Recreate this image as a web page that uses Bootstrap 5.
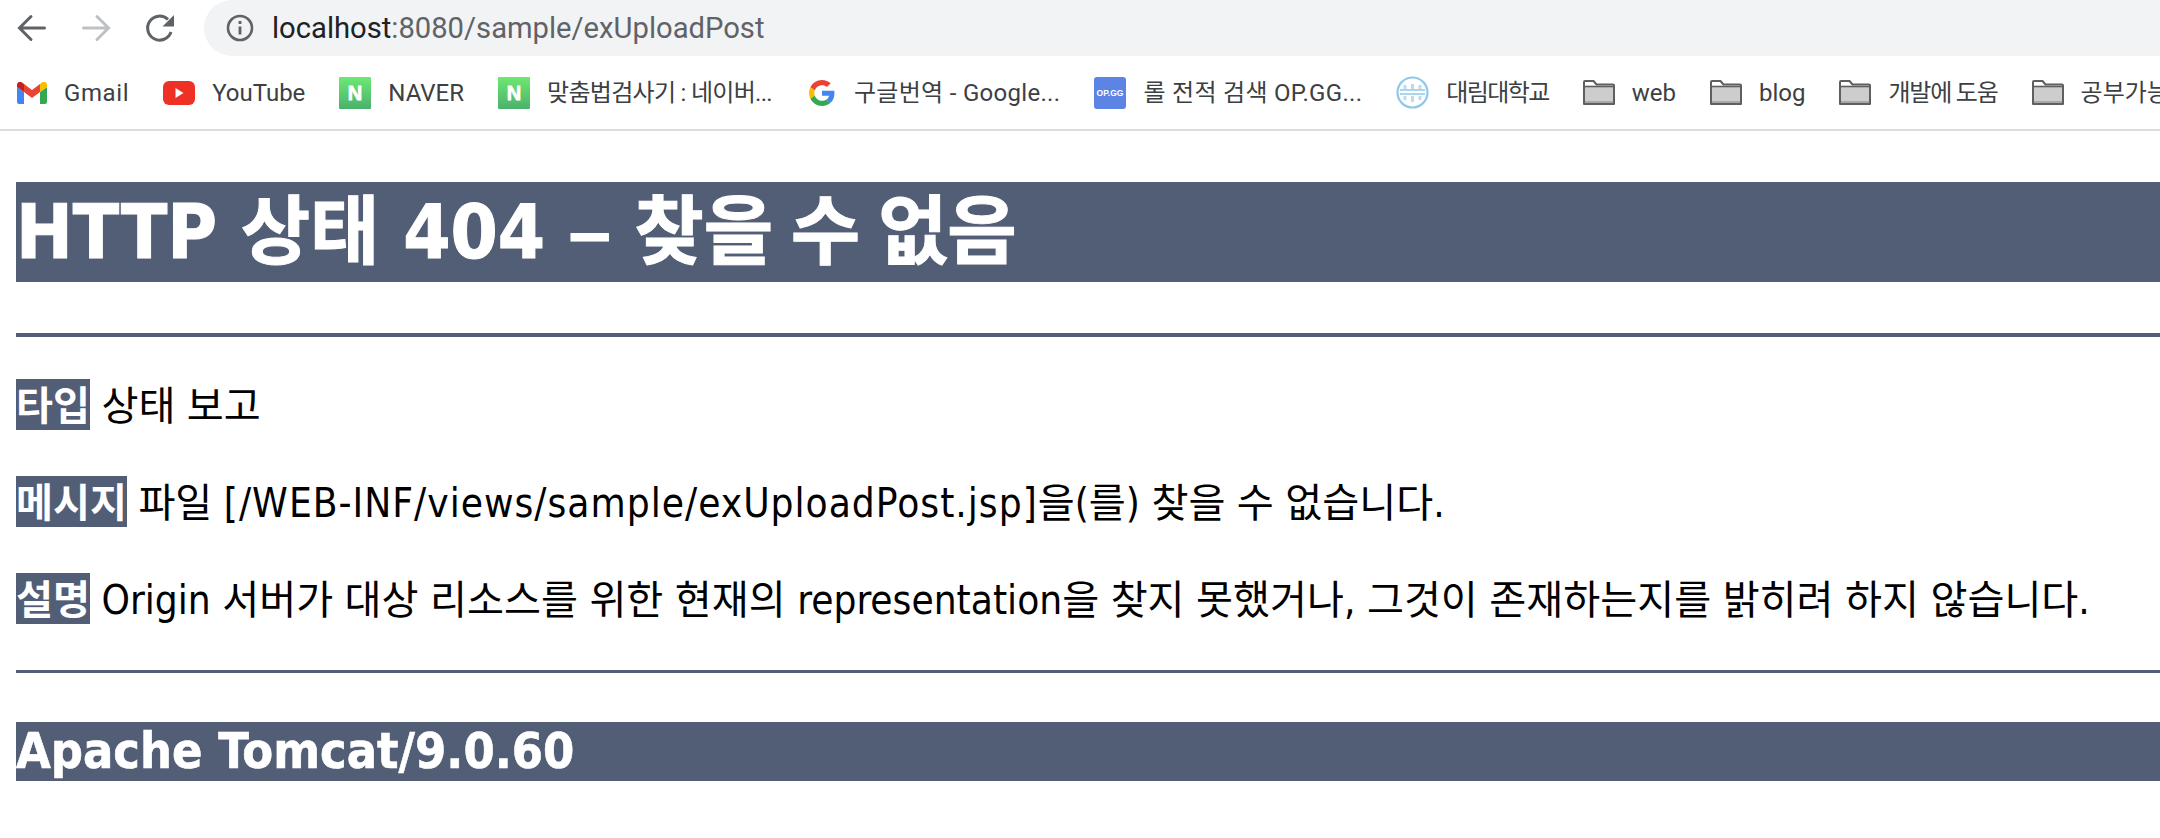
<!DOCTYPE html>
<html lang="ko">
<head>
    <meta charset="UTF-8">
    <title>HTTP 상태 404 – 찾을 수 없음</title>
    <link href="https://cdn.jsdelivr.net/npm/bootstrap@5.3.2/dist/css/bootstrap.min.css" rel="stylesheet">
    <style>
        html, body { height: 838px; overflow: hidden; background: #fff; }
        body { font-family: "DejaVu Sans Condensed", "Noto Sans CJK KR", sans-serif; color: #000; }

        /* browser chrome */
        .toolbar { height: 56px; }
        .tool-btn { width: 32px; height: 32px; flex: none; }
        .tool-group { width: 204px; padding-left: 16px; gap: 32px; }
        .addr-bar { background: #f1f3f4; border-radius: 28px 0 0 28px; padding-left: 22px; gap: 18px;
            font: 29.2px/56px Roboto, "Noto Sans CJK KR", sans-serif; color: #5f6368; }
        .addr-host { color: #202124; }
        .bookmarks { height: 75px; padding-left: 17px; gap: 34px; border-bottom: 2px solid #dadce0;
            font: 24px/32px Roboto, "Noto Sans CJK KR", sans-serif; color: #3c4043; white-space: nowrap; }
        .bm-item { gap: 17px; flex: none; }
        .bm-wide { letter-spacing: .6px; }
        .bm-tight { letter-spacing: -.7px; }
        .bm-loose { letter-spacing: .3px; }
        .bm-narrow { letter-spacing: -1.6px; }
        .bm-google { gap: 19px; margin-left: 3px; }
        .bm-shrink { letter-spacing: -1.2px; }

        /* tomcat error page */
        .err-page { padding: 51px 0 0 16px; }
        .err-page h1, .err-page h3, .err-page b { color: #fff; background-color: #525d76; }
        .err-page h1 { font-size: 75.5px; line-height: 100px; font-weight: 700; margin: 0 0 51px; white-space: nowrap; -webkit-text-stroke: 1px #fff; }
        .err-page h3 { font-size: 50px; line-height: 59px; font-weight: 700; margin: 0; -webkit-text-stroke: .6px #fff; }
        .err-page p { font-size: 40.2px; height: 51px; line-height: 55px; margin: 0 0 46px; white-space: nowrap; }
        .err-page b { font-weight: 700; display: inline-block; height: 51px; }
        .err-dash { font-family: "Liberation Sans", sans-serif; }
        .err-tail { word-spacing: -6px; }
        .err-path { letter-spacing: 1px; }
        .err-line { height: 4px; background: #525d76; margin-bottom: 42px; }
        .err-line-thin { height: 3px; margin-bottom: 49px; }
    </style>
</head>
<body>
    <!-- Toolbar -->
    <div class="toolbar d-flex">
        <div class="tool-group d-flex align-items-center">
            <svg class="tool-btn" viewBox="0 0 32 32" fill="none" stroke="#5f6368" stroke-width="3" stroke-linecap="round"><path d="M28.500 16H5M15 4.500 3.500 16 15 27.500"/></svg>
            <svg class="tool-btn" viewBox="0 0 32 32" fill="none" stroke="#bdc1c6" stroke-width="3" stroke-linecap="round"><path d="M3.500 16H27M17 4.500 28.500 16 17 27.500"/></svg>
            <svg class="tool-btn" viewBox="0 0 32 32" fill="none" stroke="#5f6368" stroke-width="3"><path d="M27 20A12 12 0 1 1 24 7.500"/><path d="M30 3v11.500H18.500z" fill="#5f6368" stroke="none"/></svg>
        </div>
        <div class="addr-bar flex-grow-1 d-flex align-items-center">
            <svg width="28" height="28" viewBox="0 0 28 28" fill="none"><circle cx="14" cy="14" r="12" stroke="#5f6368" stroke-width="2.600"/><path d="M14 12.500v8M14 7v3" stroke="#5f6368" stroke-width="2.800"/></svg>
            <div><span class="addr-host">localhost</span>:8080/sample/exUploadPost</div>
        </div>
    </div>

    <!-- Bookmarks -->
    <div class="bookmarks d-flex align-items-center overflow-hidden">
        <div class="bm-item d-flex align-items-center">
            <svg width="30" height="22" viewBox="0 0 30 22"><path d="M0 5v15a2 2 0 0 0 2 2h5V10z" fill="#4285f4"/><path d="M30 5v15a2 2 0 0 1-2 2h-5V10z" fill="#34a853"/><path d="M23 2v8l7-5V3c0-3-3-4-5-2.500z" fill="#fbbc04"/><path d="M7 10V2l8 6 8-6v8l-8 6z" fill="#ea4335"/><path d="M0 3c0-3 3-4 5-2.500L7 2v8L0 5z" fill="#c5221f"/></svg>
            <span class="bm-wide">Gmail</span>
        </div>
        <div class="bm-item d-flex align-items-center">
            <svg width="32" height="24" viewBox="0 0 32 24"><rect width="32" height="24" rx="6" fill="#ee3124"/><path d="M12.500 7v10l8-5z" fill="#fff"/></svg>
            <span>YouTube</span>
        </div>
        <div class="bm-item d-flex align-items-center">
            <svg width="32" height="32" viewBox="0 0 32 32"><defs><linearGradient id="nv" x1="0" y1="0" x2="0" y2="1"><stop offset="0" stop-color="#6ee873"/><stop offset="1" stop-color="#4bb16c"/></linearGradient></defs><rect width="32" height="32" rx="1" fill="url(#nv)"/><text x="16" y="23" text-anchor="middle" font-family="Liberation Sans" font-weight="700" font-size="20" fill="#fff" stroke="#fff" stroke-width=".8">N</text></svg>
            <span>NAVER</span>
        </div>
        <div class="bm-item d-flex align-items-center">
            <svg width="32" height="32" viewBox="0 0 32 32"><rect width="32" height="32" rx="1" fill="url(#nv)"/><text x="16" y="23" text-anchor="middle" font-family="Liberation Sans" font-weight="700" font-size="20" fill="#fff" stroke="#fff" stroke-width=".8">N</text></svg>
            <span class="bm-tight">맞춤법검사기 : 네이버...</span>
        </div>
        <div class="bm-item bm-google d-flex align-items-center">
            <svg width="26" height="26" viewBox="0 0 48 48"><path fill="#ea4335" d="M24 9.500c3.500 0 6.700 1.200 9.200 3.600l6.900-6.900C35.900 2.400 30.500 0 24 0 14.600 0 6.500 5.400 2.600 13.200l8 6.200C12.500 13.600 17.800 9.500 24 9.500z"/><path fill="#4285f4" d="M47 24.500c0-1.600-.2-3.100-.4-4.500H24v9h12.900c-.6 3-2.200 5.500-4.700 7.200l7.700 6c4.500-4.200 7.100-10.300 7.100-17.700z"/><path fill="#fbbc05" d="M10.500 28.600c-.5-1.500-.8-3-.8-4.600s.3-3.200.8-4.600l-8-6.200C.9 16.500 0 20.100 0 24s.9 7.500 2.600 10.800z"/><path fill="#34a853" d="M24 48c6.500 0 11.900-2.100 15.900-5.800l-7.700-6c-2.200 1.500-4.900 2.300-8.200 2.300-6.200 0-11.500-4.200-13.400-9.900l-8 6.200C6.500 42.600 14.600 48 24 48z"/></svg>
            <span class="bm-loose">구글번역 - Google...</span>
        </div>
        <div class="bm-item d-flex align-items-center">
            <svg width="32" height="32" viewBox="0 0 32 32"><rect width="32" height="32" rx="3" fill="#5c84e4"/><text x="16" y="19" text-anchor="middle" font-family="Liberation Sans" font-weight="700" font-size="8.500" fill="#fff">OP.GG</text></svg>
            <span class="bm-loose">롤 전적 검색 OP.GG...</span>
        </div>
        <div class="bm-item d-flex align-items-center">
            <svg width="33" height="33" viewBox="0 0 33 33" fill="none" stroke="#8fc8ea"><circle cx="16.500" cy="16.500" r="15" stroke-width="2.200"/><path d="M4 14h25M4 18h25" stroke-width="1.600"/><path d="M9 9v4M16.500 8v5M24 9v4M9 20v4M16.500 20v6M24 20v4" stroke-width="3" stroke="#b9dcf2"/></svg>
            <span class="bm-narrow">대림대학교</span>
        </div>
        <div class="bm-item d-flex align-items-center">
            <svg width="32" height="25" viewBox="0 0 32 25"><path d="M1 24V2C1 1.400 1.400 1 2 1h8.500l3 3.500H30c.6 0 1 .4 1 1V24z" fill="#fff" stroke="#5f5f5f" stroke-width="2" stroke-linejoin="round"/><path d="M2 7h28v14H2z" fill="#cdcdcd"/><path d="M2 21h28v2H2z" fill="#a8a8a8"/><path d="M1 6.500h30" stroke="#5f5f5f" stroke-width="1.600"/></svg>
            <span>web</span>
        </div>
        <div class="bm-item d-flex align-items-center">
            <svg width="32" height="25" viewBox="0 0 32 25"><path d="M1 24V2C1 1.400 1.400 1 2 1h8.500l3 3.500H30c.6 0 1 .4 1 1V24z" fill="#fff" stroke="#5f5f5f" stroke-width="2" stroke-linejoin="round"/><path d="M2 7h28v14H2z" fill="#cdcdcd"/><path d="M2 21h28v2H2z" fill="#a8a8a8"/><path d="M1 6.500h30" stroke="#5f5f5f" stroke-width="1.600"/></svg>
            <span>blog</span>
        </div>
        <div class="bm-item d-flex align-items-center">
            <svg width="32" height="25" viewBox="0 0 32 25"><path d="M1 24V2C1 1.400 1.400 1 2 1h8.500l3 3.500H30c.6 0 1 .4 1 1V24z" fill="#fff" stroke="#5f5f5f" stroke-width="2" stroke-linejoin="round"/><path d="M2 7h28v14H2z" fill="#cdcdcd"/><path d="M2 21h28v2H2z" fill="#a8a8a8"/><path d="M1 6.500h30" stroke="#5f5f5f" stroke-width="1.600"/></svg>
            <span class="bm-shrink">개발에 도움</span>
        </div>
        <div class="bm-item d-flex align-items-center">
            <svg width="32" height="25" viewBox="0 0 32 25"><path d="M1 24V2C1 1.400 1.400 1 2 1h8.500l3 3.500H30c.6 0 1 .4 1 1V24z" fill="#fff" stroke="#5f5f5f" stroke-width="2" stroke-linejoin="round"/><path d="M2 7h28v14H2z" fill="#cdcdcd"/><path d="M2 21h28v2H2z" fill="#a8a8a8"/><path d="M1 6.500h30" stroke="#5f5f5f" stroke-width="1.600"/></svg>
            <span>공부가능</span>
        </div>
    </div>

    <!-- Error page -->
    <div class="err-page">
        <h1>HTTP 상태 404 <span class="err-dash">–</span> <span class="err-tail">찾을 수 없음</span></h1>
        <div class="err-line"></div>
        <p><b>타입</b> 상태 보고</p>
        <p><b>메시지</b> 파일 <span class="err-path">[/WEB-INF/views/sample/exUploadPost.jsp]</span>을(를) 찾을 수 없습니다.</p>
        <p><b>설명</b> Origin 서버가 대상 리소스를 위한 현재의 representation을 찾지 못했거나, 그것이 존재하는지를 밝히려 하지 않습니다.</p>
        <div class="err-line err-line-thin"></div>
        <h3>Apache Tomcat/9.0.60</h3>
    </div>

    <script src="https://cdn.jsdelivr.net/npm/bootstrap@5.3.2/dist/js/bootstrap.bundle.min.js"></script>
</body>
</html>
